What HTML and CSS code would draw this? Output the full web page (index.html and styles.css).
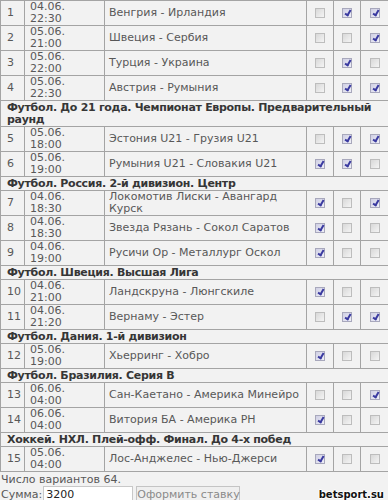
FILE: index.html
```
<!DOCTYPE html>
<html>
<head>
<meta charset="utf-8">
<link rel="stylesheet" href="styles.css">
</head>
<body>
<table class="bets">
<colgroup><col class="c-n"><col class="c-d"><col class="c-t"><col class="c-x"><col class="c-x"><col class="c-y"></colgroup>
<tr><td class="num">1</td><td class="date">04.06.<br>22:30</td><td class="team">Венгрия - Ирландия</td><td class="cb"><span class="box"></span></td><td class="cb"><span class="box on"></span></td><td class="cb"><span class="box on"></span></td></tr>
<tr><td class="num">2</td><td class="date">05.06.<br>21:00</td><td class="team">Швеция - Сербия</td><td class="cb"><span class="box"></span></td><td class="cb"><span class="box"></span></td><td class="cb"><span class="box on"></span></td></tr>
<tr><td class="num">3</td><td class="date">05.06.<br>22:00</td><td class="team">Турция - Украина</td><td class="cb"><span class="box"></span></td><td class="cb"><span class="box on"></span></td><td class="cb"><span class="box"></span></td></tr>
<tr><td class="num">4</td><td class="date">05.06.<br>22:30</td><td class="team">Австрия - Румыния</td><td class="cb"><span class="box"></span></td><td class="cb"><span class="box on"></span></td><td class="cb"><span class="box on"></span></td></tr>
<tr><td class="head" colspan="6">Футбол. До 21 года. Чемпионат Европы. Предварительный раунд</td></tr>
<tr><td class="num">5</td><td class="date">05.06.<br>18:00</td><td class="team">Эстония U21 - Грузия U21</td><td class="cb"><span class="box"></span></td><td class="cb"><span class="box on"></span></td><td class="cb"><span class="box on"></span></td></tr>
<tr><td class="num">6</td><td class="date">05.06.<br>19:00</td><td class="team">Румыния U21 - Словакия U21</td><td class="cb"><span class="box on"></span></td><td class="cb"><span class="box on"></span></td><td class="cb"><span class="box"></span></td></tr>
<tr><td class="head" colspan="6">Футбол. Россия. 2-й дивизион. Центр</td></tr>
<tr><td class="num">7</td><td class="date">04.06.<br>18:30</td><td class="team">Локомотив Лиски - Авангард Курск</td><td class="cb"><span class="box on"></span></td><td class="cb"><span class="box"></span></td><td class="cb"><span class="box on"></span></td></tr>
<tr><td class="num">8</td><td class="date">04.06.<br>18:30</td><td class="team">Звезда Рязань - Сокол Саратов</td><td class="cb"><span class="box on"></span></td><td class="cb"><span class="box"></span></td><td class="cb"><span class="box"></span></td></tr>
<tr><td class="num">9</td><td class="date">04.06.<br>19:00</td><td class="team">Русичи Ор - Металлург Оскол</td><td class="cb"><span class="box on"></span></td><td class="cb"><span class="box"></span></td><td class="cb"><span class="box"></span></td></tr>
<tr><td class="head" colspan="6">Футбол. Швеция. Высшая Лига</td></tr>
<tr><td class="num">10</td><td class="date">04.06.<br>21:00</td><td class="team">Ландскруна - Люнгскиле</td><td class="cb"><span class="box on"></span></td><td class="cb"><span class="box"></span></td><td class="cb"><span class="box"></span></td></tr>
<tr><td class="num">11</td><td class="date">04.06.<br>21:20</td><td class="team">Вернаму - Эстер</td><td class="cb"><span class="box"></span></td><td class="cb"><span class="box on"></span></td><td class="cb"><span class="box on"></span></td></tr>
<tr><td class="head" colspan="6">Футбол. Дания. 1-й дивизион</td></tr>
<tr><td class="num">12</td><td class="date">05.06.<br>19:00</td><td class="team">Хьерринг - Хобро</td><td class="cb"><span class="box on"></span></td><td class="cb"><span class="box"></span></td><td class="cb"><span class="box"></span></td></tr>
<tr><td class="head" colspan="6">Футбол. Бразилия. Серия B</td></tr>
<tr><td class="num">13</td><td class="date">06.06.<br>04:00</td><td class="team">Сан-Каетано - Америка Минейро</td><td class="cb"><span class="box"></span></td><td class="cb"><span class="box"></span></td><td class="cb"><span class="box on"></span></td></tr>
<tr><td class="num">14</td><td class="date">06.06.<br>04:00</td><td class="team">Витория БА - Америка РН</td><td class="cb"><span class="box on"></span></td><td class="cb"><span class="box"></span></td><td class="cb"><span class="box"></span></td></tr>
<tr><td class="head" colspan="6">Хоккей. НХЛ. Плей-офф. Финал. До 4-х побед</td></tr>
<tr><td class="num">15</td><td class="date">05.06.<br>04:00</td><td class="team">Лос-Анджелес - Нью-Джерси</td><td class="cb"><span class="box on"></span></td><td class="cb"><span class="box"></span></td><td class="cb"><span class="box"></span></td></tr>
</table>
<div class="info">Число вариантов 64.</div>
<div class="form">
<span class="label">Сумма:</span><span class="input">3200</span><span class="btn">Оформить ставку</span><span class="mark">betsport.su</span>
</div>
</body>
</html>
```
FILE: styles.css
```
html, body {
  margin: 0;
  padding: 0;
  background: #f2f2f2;
}
body {
  font-family: "DejaVu Sans", Verdana, sans-serif;
  font-size: 11px;
  line-height: 12px;
  color: #585858;
  width: 388px;
  height: 500px;
  overflow: hidden;
}
.bets {
  width: 388px;
  border-collapse: collapse;
  table-layout: fixed;
}
.c-n { width: 24px; }
.c-d { width: 80px; }
.c-t { width: 202px; }
.c-x { width: 27px; }
.c-y { width: 28px; }
.bets td {
  border: 1px solid #a4a4a4;
  padding: 0 3px;
  vertical-align: middle;
  height: 24px;
}
.bets td.num { padding: 0 0 0 6px; }
.bets td.date { padding-left: 5px; }
.bets td.team { padding-left: 4px; }
.bets td.cb { padding: 0; text-align: center; }
.bets td.head {
  height: auto;
  padding: 1px 0 0 6px;
  font-weight: bold;
  color: #363636;
  line-height: 12px;
  letter-spacing: -0.3px;
}
.box {
  display: inline-block;
  width: 10px;
  height: 10px;
  box-sizing: border-box;
  border: 1px solid #bdbdbd;
  background: linear-gradient(135deg, #d8d8d8, #f4f4f4);
  vertical-align: middle;
  position: relative;
}
.box.on {
  border-color: #a8a8bc;
  background: linear-gradient(135deg, #cfcfe4, #efeff7);
}
.box.on::after {
  content: "";
  position: absolute;
  left: 3px;
  top: 0px;
  width: 2px;
  height: 5px;
  border-right: 2px solid #3a3aa0;
  border-bottom: 2px solid #3a3aa0;
  transform: rotate(30deg);
}
.info {
  padding: 2px 0 0 1px;
  height: 12px;
}
.form {
  display: flex;
  align-items: center;
  padding-left: 1px;
  height: 17px;
  white-space: nowrap;
}
.label { margin-right: 1px; }
.input {
  display: inline-block;
  width: 86px;
  height: 15px;
  line-height: 15px;
  padding-left: 2px;
  background: #fff;
  border: 1px solid #c8c8c8;
  color: #222;
}
.btn {
  display: inline-block;
  margin-left: 3px;
  width: 102px;
  height: 15px;
  line-height: 15px;
  text-align: center;
  background: #efefef;
  border: 1px solid #c4c4c4;
  color: #8a8a8a;
}
.mark {
  margin-left: auto;
  margin-right: 4px;
  font-weight: bold;
  font-size: 10px;
  color: #111;
  text-shadow: 1px 0 0 #fff, -1px 0 0 #fff, 0 1px 0 #fff, 0 -1px 0 #fff;
}
```
